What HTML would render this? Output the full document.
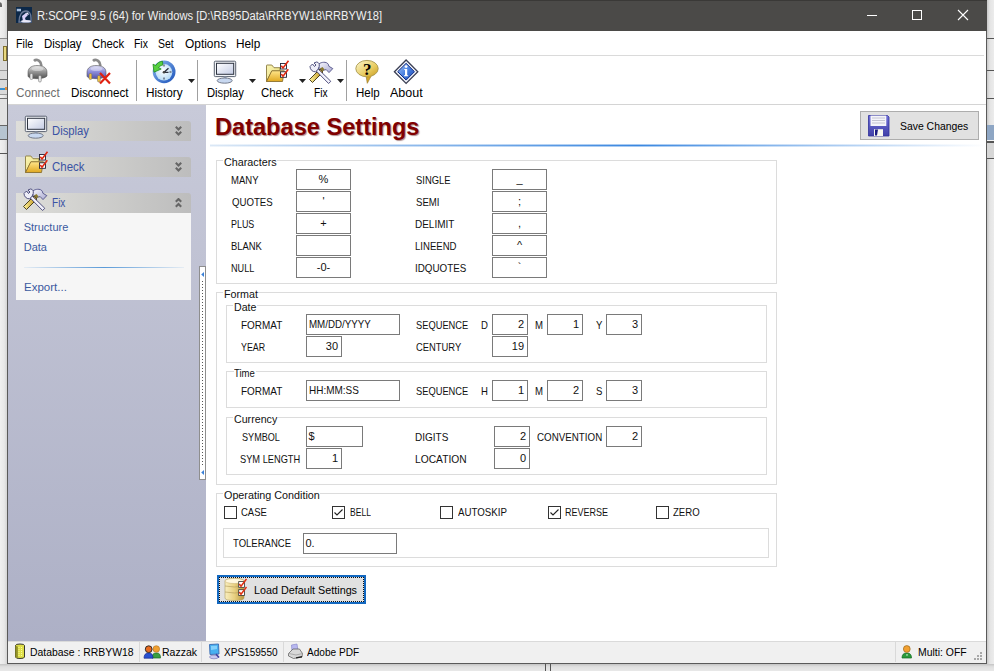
<!DOCTYPE html>
<html><head><meta charset="utf-8">
<style>
*{margin:0;padding:0;box-sizing:border-box}
html,body{width:994px;height:671px;overflow:hidden;background:#ececec;font-family:"Liberation Sans",sans-serif;color:#000}
.a{position:absolute}
.t{position:absolute;white-space:nowrap;transform-origin:0 0}
</style></head><body>
<div class="a" style="left:0px;top:0px;width:7px;height:671px;background:linear-gradient(90deg,#f0f0f0,#e8e8e8 60%,#d4d4d4)"></div>
<div class="a" style="left:0px;top:38px;width:7px;height:56px;background:#dadada"></div>
<div class="a" style="left:0px;top:38px;width:7px;height:1px;background:#8c8c8c"></div>
<div class="a" style="left:0px;top:70px;width:7px;height:1px;background:#9a9a9a"></div>
<div class="a" style="left:0px;top:79px;width:7px;height:1px;background:#6a6a6a"></div>
<div class="a" style="left:0px;top:88px;width:5px;height:2px;background:#3a90d0"></div>
<div class="a" style="left:5px;top:87px;width:2px;height:3px;background:#e09040"></div>
<div class="a" style="left:0px;top:94px;width:7px;height:1px;background:#9a9a9a"></div>
<div class="a" style="left:0px;top:98px;width:7px;height:1px;background:#707070"></div>
<div class="a" style="left:0px;top:99px;width:7px;height:26px;background:#e2e2e2"></div>
<div class="a" style="left:0px;top:125px;width:7px;height:15px;background:#b6c4d0;border-top:1px solid #666;border-bottom:1px solid #666"></div>
<div class="a" style="left:0px;top:153px;width:7px;height:1px;background:#555"></div>
<div class="a" style="left:3px;top:46px;width:4px;height:15px;background:#e8d880;border:1px solid #807030"></div>
<div class="a" style="left:-3px;top:2px;width:5px;height:5px;border-right:2px solid #666;border-top:1px solid #777;border-top-right-radius:3px"></div>
<div class="a" style="left:987px;top:0px;width:7px;height:671px;background:linear-gradient(90deg,#c8c8c8,#e4e4e4 40%,#ececec)"></div>
<div class="a" style="left:987px;top:38px;width:7px;height:1px;background:#555"></div>
<div class="a" style="left:987px;top:70px;width:7px;height:1px;background:#555"></div>
<div class="a" style="left:987px;top:98px;width:7px;height:1px;background:#555"></div>
<div class="a" style="left:987px;top:125px;width:7px;height:15px;background:#8ea6c4"></div>
<div class="a" style="left:987px;top:140px;width:7px;height:1px;background:#f4f4f4"></div>
<div class="a" style="left:987px;top:141px;width:7px;height:2px;background:#555"></div>
<div class="a" style="left:987px;top:143px;width:7px;height:15px;background:#d6d6d6"></div>
<div class="a" style="left:987px;top:158px;width:7px;height:1px;background:#555"></div>
<div class="a" style="left:0px;top:664px;width:994px;height:7px;background:linear-gradient(#c4c4c4,#e0e0e0 40%,#e8e8e8)"></div>
<div class="a" style="left:545px;top:664px;width:1px;height:7px;background:#555"></div>
<div class="a" style="left:550px;top:664px;width:1px;height:7px;background:#555"></div>
<div class="a" style="left:7px;top:0px;width:980px;height:664px;background:#fff;border:1px solid #5a5a5a;border-top:none"></div>
<div class="a" style="left:7px;top:0px;width:980px;height:31px;background:#4b4a48"></div>
<div class="a" style="left:7px;top:0px;width:980px;height:1px;background:#3a3937"></div>
<svg class="a" style="left:16px;top:7px" width="16" height="16" viewBox="0 0 16 16"><rect x="0" y="0" width="16" height="16" fill="#0c2848"/>
<path d="M3 15 C3 8 6 4 10 4 C13 4 15 7 15 11 L15 15 Z" fill="none" stroke="#6a7a98" stroke-width="1.4"/>
<path d="M6 9 L10 6 L12 8 L9 11 L10 14 L7 14 Z" fill="#d8d0f8"/>
<path d="M9 6 L12 5.5 L13 8" fill="#f0f0ff"/>
<ellipse cx="10" cy="14.2" rx="5" ry="1.3" fill="#e8e8f8"/>
<rect x="0.8" y="1.8" width="4.2" height="2.5" fill="#a8c0e0"/></svg>
<div class="t" style="left:37px;top:10px;font-size:12px;line-height:12px;color:#f0f0f0;transform:scaleX(0.9288);">R:SCOPE 9.5 (64) for Windows [D:\RB95Data\RRBYW18\RRBYW18]</div>
<div class="a" style="left:867px;top:15px;width:10px;height:1px;background:#fff"></div>
<div class="a" style="left:912px;top:10px;width:10px;height:10px;border:1px solid #fff"></div>
<svg class="a" style="left:957px;top:9px" width="12" height="12" viewBox="0 0 12 12"><path d="M1 1 L11 11 M11 1 L1 11" stroke="#fff" stroke-width="1.1"/></svg>
<div class="t" style="left:15.8px;top:38px;font-size:12px;line-height:12px;color:#000;transform:scaleX(0.8896);">File</div>
<div class="t" style="left:43.5px;top:38px;font-size:12px;line-height:12px;color:#000;transform:scaleX(0.9557);">Display</div>
<div class="t" style="left:91.6px;top:38px;font-size:12px;line-height:12px;color:#000;transform:scaleX(0.9467);">Check</div>
<div class="t" style="left:134.2px;top:38px;font-size:12px;line-height:12px;color:#000;transform:scaleX(0.8690);">Fix</div>
<div class="t" style="left:158.3px;top:38px;font-size:12px;line-height:12px;color:#000;transform:scaleX(0.8716);">Set</div>
<div class="t" style="left:184.7px;top:38px;font-size:12px;line-height:12px;color:#000;transform:scaleX(0.9938);">Options</div>
<div class="t" style="left:236.3px;top:38px;font-size:12px;line-height:12px;color:#000;transform:scaleX(0.9847);">Help</div>
<div class="a" style="left:8px;top:55px;width:976px;height:1px;background:#dadada"></div>
<svg width="0" height="0" style="position:absolute"><defs>
<linearGradient id="gPlug" x1="0" y1="0" x2="0" y2="1"><stop offset="0" stop-color="#e8e8e8"/><stop offset="0.45" stop-color="#9a9a9a"/><stop offset="1" stop-color="#505050"/></linearGradient>
<linearGradient id="gPlugP" x1="0" y1="0" x2="0" y2="1"><stop offset="0" stop-color="#dcdcf4"/><stop offset="0.45" stop-color="#9090dc"/><stop offset="1" stop-color="#5050a8"/></linearGradient>
<linearGradient id="gGold" x1="0" y1="0" x2="1" y2="0"><stop offset="0" stop-color="#fff4a0"/><stop offset="1" stop-color="#b88a10"/></linearGradient>
<radialGradient id="gClockFace" cx="0.45" cy="0.4" r="0.6"><stop offset="0" stop-color="#ffffff"/><stop offset="1" stop-color="#b8dcf6"/></radialGradient>
<linearGradient id="gClockRing" x1="0" y1="0" x2="1" y2="1"><stop offset="0" stop-color="#8ab8f0"/><stop offset="1" stop-color="#1a50b8"/></linearGradient>
<linearGradient id="gScreen" x1="0" y1="0" x2="1" y2="1"><stop offset="0" stop-color="#ffffff"/><stop offset="1" stop-color="#c4cce4"/></linearGradient>
<linearGradient id="gFolderF" x1="0" y1="0" x2="0" y2="1"><stop offset="0" stop-color="#ffe58a"/><stop offset="1" stop-color="#e0a820"/></linearGradient>
<linearGradient id="gFolderB" x1="0" y1="0" x2="1" y2="1"><stop offset="0" stop-color="#fbf6b8"/><stop offset="1" stop-color="#e8d870"/></linearGradient>
<linearGradient id="gHelp" x1="0" y1="0" x2="1" y2="1"><stop offset="0" stop-color="#fbf6d0"/><stop offset="0.6" stop-color="#e8cc60"/><stop offset="1" stop-color="#c89a20"/></linearGradient>
<linearGradient id="gInfo" x1="0" y1="0" x2="1" y2="1"><stop offset="0" stop-color="#a8c8f8"/><stop offset="0.5" stop-color="#4a80e0"/><stop offset="1" stop-color="#1a48b0"/></linearGradient>
<linearGradient id="gHammer" x1="0" y1="0" x2="1" y2="1"><stop offset="0" stop-color="#fafaff"/><stop offset="1" stop-color="#a8a8d0"/></linearGradient>
<linearGradient id="gFloppy" x1="0" y1="0" x2="0" y2="1"><stop offset="0" stop-color="#7070d8"/><stop offset="1" stop-color="#4040a8"/></linearGradient>
<linearGradient id="gDb" x1="0" y1="0" x2="1" y2="0"><stop offset="0" stop-color="#f8eec0"/><stop offset="0.5" stop-color="#e8d080"/><stop offset="1" stop-color="#b89840"/></linearGradient>
</defs></svg>
<svg class="a" style="left:27px;top:56px" width="24" height="30" viewBox="0 0 24 30"><path d="M7 5 C9 3 12 4 13.5 6.5 L14.5 10" fill="none" stroke="#8a8a8a" stroke-width="2.6"/>
<path d="M1 16.5 C1 11 6 9.5 10 9.5 C15 9.5 20 11 20 16.5 L20 20 C17 23.5 4 23.5 1 20.5 Z" fill="url(#gPlug)" stroke="#555" stroke-width="0.6"/>
<ellipse cx="10.5" cy="13" rx="6" ry="2" fill="rgba(255,255,255,0.35)"/>
<rect x="3" y="17.5" width="2.8" height="6" rx="1.2" fill="#e4e4e4" stroke="#666" stroke-width="0.5"/>
<rect x="11.5" y="19.5" width="2.8" height="6.5" rx="1.2" fill="#e4e4e4" stroke="#666" stroke-width="0.5"/></svg>
<svg class="a" style="left:86px;top:56px" width="30" height="30" viewBox="0 0 30 30"><path d="M7 5 C9 3 12 4 13.5 6.5 L14.5 10" fill="none" stroke="#8a8a8a" stroke-width="2.6"/>
<path d="M1 16.5 C1 11 6 9.5 10 9.5 C15 9.5 20 11 20 16.5 L20 20 C17 23.5 4 23.5 1 20.5 Z" fill="url(#gPlugP)" stroke="#555" stroke-width="0.6"/>
<ellipse cx="10.5" cy="13" rx="6" ry="2" fill="rgba(255,255,255,0.35)"/>
<rect x="3" y="17.5" width="2.8" height="6" rx="1.2" fill="#f0c040" stroke="#666" stroke-width="0.5"/>
<rect x="11.5" y="19.5" width="2.8" height="6.5" rx="1.2" fill="#f0c040" stroke="#666" stroke-width="0.5"/><path d="M14 17 L24 27.5 M24 17 L14 27.5" stroke="#e02010" stroke-width="2.2"/></svg>
<svg class="a" style="left:152px;top:60px" width="24" height="24" viewBox="0 0 24 24"><circle cx="12.1" cy="11.8" r="11.4" fill="url(#gClockRing)"/>
<circle cx="12" cy="12.3" r="8.3" fill="url(#gClockFace)"/>
<path d="M12 4.5 V6.5 M12 17.5 V19.5 M19.5 12 H17.5" stroke="#334" stroke-width="1"/>
<path d="M12 12.3 L16.5 8.2 M12 12.3 H16.5" stroke="#2a3040" stroke-width="1.3"/>
<circle cx="12" cy="12.3" r="1.3" fill="#444"/>
<path d="M10.5 1.2 C7.5 1.5 5.2 3 3.8 5.5 L1 4.2 L2 12.2 L9.2 9 L6.6 7.7 C7.5 6.3 8.8 5.4 10.8 5 Z" fill="#58d040" stroke="#208a20" stroke-width="0.8"/></svg>
<svg class="a" style="left:208px;top:57px" width="32" height="30" viewBox="0 0 32 30"><rect x="6.3" y="4.2" width="21.4" height="15.4" rx="1" fill="#f2f4f8" stroke="#5a6270" stroke-width="1"/>
<rect x="8.5" y="6.3" width="17.2" height="11" fill="url(#gScreen)" stroke="#2e3440" stroke-width="1"/>
<rect x="15.6" y="19.6" width="3" height="3.2" fill="#9aa6ba"/>
<ellipse cx="16.7" cy="23.6" rx="7.5" ry="2.6" fill="#c8d8f0" stroke="#6a7080" stroke-width="0.9"/></svg>
<svg class="a" style="left:262px;top:57px" width="32" height="30" viewBox="0 0 32 30"><path d="M4.5 24.5 L4.5 8.5 Q4.5 8 5 8 L9.8 8 L12 10.7 L18 10.7 L18 14 L10 14 Z" fill="url(#gFolderB)" stroke="#8a7a40" stroke-width="0.9"/>
<path d="M4.5 24.5 L9.8 13.8 L22.3 13.8 L20.5 24.5 Z" fill="url(#gFolderF)" stroke="#8a7030" stroke-width="0.9"/>
<rect x="18.5" y="6.5" width="6" height="5.5" fill="#fff" stroke="#223" stroke-width="0.9"/>
<rect x="18.5" y="14.8" width="6" height="5.5" fill="#fff" stroke="#223" stroke-width="0.9"/>
<path d="M19.3 8.8 L21 11 L26.5 3.8" fill="none" stroke="#e02810" stroke-width="1.6"/>
<path d="M19.3 17 L21 19.2 L26.3 12.2" fill="none" stroke="#e02810" stroke-width="1.6"/></svg>
<svg class="a" style="left:305px;top:57px" width="32" height="30" viewBox="0 0 32 30"><path d="M4.5 22.5 L15 12 L18 15 L7.5 25.5 Z" fill="url(#gGold)" stroke="#3a3010" stroke-width="0.9"/>
<path d="M12.5 9.5 C13 6.5 16.5 5 20 5.3 C22.5 5.6 23.8 7.3 23.8 9.2 L27.8 11.6 L24 15.6 L21.2 12.6 L17.5 13.5 Z" fill="url(#gHammer)" stroke="#505088" stroke-width="0.9"/>
<path d="M15 11.5 L17.5 10 L19.5 12.5 L17.5 14.5 Z" fill="#8a7a30"/>
<path d="M11 13.8 L13 11.8 L25.8 24.3 L23.6 26.5 Z" fill="#f2f2fc" stroke="#404070" stroke-width="0.9"/>
<path d="M5 9.5 L7.5 7 L9.5 9.5 L11 8 L9 6 L11.5 5 C13.5 5 14.8 7 14.2 9.5 L13 12.5 L10.5 14.8 C7.5 15 5 12.5 5 9.5 Z" fill="#eeeef8" stroke="#404070" stroke-width="0.9"/></svg>
<svg class="a" style="left:351px;top:57px" width="32" height="30" viewBox="0 0 32 30"><path d="M15.2 19.8 L16.3 26.3 L19.8 19.6 Z" fill="#d4a828" stroke="#a08030" stroke-width="0.7"/>
<ellipse cx="16" cy="11.6" rx="11.2" ry="8.2" fill="url(#gHelp)" stroke="#a89850" stroke-width="0.9"/>
<path d="M16.5 19.6 L19.6 19.6" stroke="#d4a828" stroke-width="1.4"/>
<text x="16.2" y="18" text-anchor="middle" font-family="Liberation Serif" font-weight="bold" font-size="17" fill="#000">?</text></svg>
<svg class="a" style="left:390px;top:57px" width="32" height="30" viewBox="0 0 32 30"><path d="M16.1 3 L27.8 14.7 L16.1 26.4 L4.4 14.7 Z" fill="#f4f6fc" stroke="#3a3e52" stroke-width="1.3"/>
<path d="M16.1 6.3 L24.5 14.7 L16.1 23.1 L7.7 14.7 Z" fill="url(#gInfo)" stroke="#102a80" stroke-width="1"/>
<circle cx="16.1" cy="9.6" r="1.4" fill="#fff"/>
<path d="M14.3 12 H17.2 V18.2 H18.2 V19.2 H14 V18.2 H15 V13 H14.3 Z" fill="#fff"/></svg>
<div class="a" style="left:8px;top:104px;width:978px;height:1px;background:#d4d4d4"></div>
<div class="a" style="left:136px;top:60px;width:1px;height:41px;background:#a0a0a0"></div>
<div class="a" style="left:197px;top:60px;width:1px;height:41px;background:#a0a0a0"></div>
<div class="a" style="left:346px;top:60px;width:1px;height:41px;background:#a0a0a0"></div>
<div class="t" style="left:16px;top:87px;font-size:12px;line-height:12px;color:#6d6d6d;transform:scaleX(0.9778);">Connect</div>
<div class="t" style="left:71.1px;top:87px;font-size:12px;line-height:12px;color:#000;transform:scaleX(0.9687);">Disconnect</div>
<div class="t" style="left:145.7px;top:87px;font-size:12px;line-height:12px;color:#000;transform:scaleX(0.9803);">History</div>
<div class="t" style="left:206.8px;top:87px;font-size:12px;line-height:12px;color:#000;transform:scaleX(0.9353);">Display</div>
<div class="t" style="left:261.4px;top:87px;font-size:12px;line-height:12px;color:#000;transform:scaleX(0.9526);">Check</div>
<div class="t" style="left:314.2px;top:87px;font-size:12px;line-height:12px;color:#000;transform:scaleX(0.8502);">Fix</div>
<div class="t" style="left:355.6px;top:87px;font-size:12px;line-height:12px;color:#000;transform:scaleX(0.9604);">Help</div>
<div class="t" style="left:390.3px;top:87px;font-size:12px;line-height:12px;color:#000;transform:scaleX(1.0428);">About</div>
<svg class="a" style="left:188px;top:79px" width="7" height="4" viewBox="0 0 7 4"><path d="M0 0 H7 L3.5 4 Z" fill="#222"/></svg>
<svg class="a" style="left:249px;top:79px" width="7" height="4" viewBox="0 0 7 4"><path d="M0 0 H7 L3.5 4 Z" fill="#222"/></svg>
<svg class="a" style="left:299px;top:79px" width="7" height="4" viewBox="0 0 7 4"><path d="M0 0 H7 L3.5 4 Z" fill="#222"/></svg>
<svg class="a" style="left:337px;top:79px" width="7" height="4" viewBox="0 0 7 4"><path d="M0 0 H7 L3.5 4 Z" fill="#222"/></svg>
<div class="a" style="left:8px;top:105px;width:198px;height:536px;background:linear-gradient(#c8cad9,#adb0c6)"></div>
<div class="a" style="left:16px;top:121px;width:175px;height:20px;background:linear-gradient(90deg,#dededa,#bdbdbd);border-top-right-radius:3px"></div>
<div class="a" style="left:16px;top:157px;width:175px;height:20px;background:linear-gradient(90deg,#dededa,#bdbdbd);border-top-right-radius:3px"></div>
<div class="a" style="left:16px;top:193px;width:175px;height:20px;background:linear-gradient(90deg,#dededa,#bdbdbd);border-top-right-radius:3px"></div>
<div class="t" style="left:52.3px;top:125px;font-size:12px;line-height:12px;color:#3a53a4;transform:scaleX(0.9404);">Display</div>
<div class="t" style="left:52.3px;top:161px;font-size:12px;line-height:12px;color:#3a53a4;transform:scaleX(0.9555);">Check</div>
<div class="t" style="left:52.3px;top:197px;font-size:12px;line-height:12px;color:#3a53a4;transform:scaleX(0.8377);">Fix</div>
<svg class="a" style="left:175px;top:126px" width="7" height="10" viewBox="0 0 7 10"><path d="M0.8 0.8 L3.5 3.5 L6.2 0.8 M0.8 5.8 L3.5 8.5 L6.2 5.8" fill="none" stroke="#666" stroke-width="2.1"/></svg>
<svg class="a" style="left:175px;top:162px" width="7" height="10" viewBox="0 0 7 10"><path d="M0.8 0.8 L3.5 3.5 L6.2 0.8 M0.8 5.8 L3.5 8.5 L6.2 5.8" fill="none" stroke="#666" stroke-width="2.1"/></svg>
<svg class="a" style="left:175px;top:198px" width="7" height="10" viewBox="0 0 7 10"><path d="M0.8 3.7 L3.5 1 L6.2 3.7 M0.8 8.7 L3.5 6 L6.2 8.7" fill="none" stroke="#666" stroke-width="2.1"/></svg>
<svg class="a" style="left:19px;top:112px" width="32" height="30" viewBox="0 0 32 30"><rect x="6.3" y="4.2" width="21.4" height="15.4" rx="1" fill="#f2f4f8" stroke="#5a6270" stroke-width="1"/>
<rect x="8.5" y="6.3" width="17.2" height="11" fill="url(#gScreen)" stroke="#2e3440" stroke-width="1"/>
<rect x="15.6" y="19.6" width="3" height="3.2" fill="#9aa6ba"/>
<ellipse cx="16.7" cy="23.6" rx="7.5" ry="2.6" fill="#c8d8f0" stroke="#6a7080" stroke-width="0.9"/></svg>
<svg class="a" style="left:21px;top:148px" width="32" height="30" viewBox="0 0 32 30"><path d="M4.5 24.5 L4.5 8.5 Q4.5 8 5 8 L9.8 8 L12 10.7 L18 10.7 L18 14 L10 14 Z" fill="url(#gFolderB)" stroke="#8a7a40" stroke-width="0.9"/>
<path d="M4.5 24.5 L9.8 13.8 L22.3 13.8 L20.5 24.5 Z" fill="url(#gFolderF)" stroke="#8a7030" stroke-width="0.9"/>
<rect x="18.5" y="6.5" width="6" height="5.5" fill="#fff" stroke="#223" stroke-width="0.9"/>
<rect x="18.5" y="14.8" width="6" height="5.5" fill="#fff" stroke="#223" stroke-width="0.9"/>
<path d="M19.3 8.8 L21 11 L26.5 3.8" fill="none" stroke="#e02810" stroke-width="1.6"/>
<path d="M19.3 17 L21 19.2 L26.3 12.2" fill="none" stroke="#e02810" stroke-width="1.6"/></svg>
<svg class="a" style="left:19px;top:184px" width="32" height="30" viewBox="0 0 32 30"><path d="M4.5 22.5 L15 12 L18 15 L7.5 25.5 Z" fill="url(#gGold)" stroke="#3a3010" stroke-width="0.9"/>
<path d="M12.5 9.5 C13 6.5 16.5 5 20 5.3 C22.5 5.6 23.8 7.3 23.8 9.2 L27.8 11.6 L24 15.6 L21.2 12.6 L17.5 13.5 Z" fill="url(#gHammer)" stroke="#505088" stroke-width="0.9"/>
<path d="M15 11.5 L17.5 10 L19.5 12.5 L17.5 14.5 Z" fill="#8a7a30"/>
<path d="M11 13.8 L13 11.8 L25.8 24.3 L23.6 26.5 Z" fill="#f2f2fc" stroke="#404070" stroke-width="0.9"/>
<path d="M5 9.5 L7.5 7 L9.5 9.5 L11 8 L9 6 L11.5 5 C13.5 5 14.8 7 14.2 9.5 L13 12.5 L10.5 14.8 C7.5 15 5 12.5 5 9.5 Z" fill="#eeeef8" stroke="#404070" stroke-width="0.9"/></svg>
<div class="a" style="left:16px;top:213px;width:175px;height:87px;background:#f6f6f6"></div>
<div class="t" style="left:23.7px;top:222px;font-size:11px;line-height:11px;color:#3b5aa0;">Structure</div>
<div class="t" style="left:23.7px;top:242px;font-size:11px;line-height:11px;color:#3b5aa0;">Data</div>
<div class="t" style="left:23.7px;top:282px;font-size:11px;line-height:11px;color:#3b5aa0;transform:scaleX(1.0474);">Export...</div>
<div class="a" style="left:24px;top:267px;width:160px;height:1px;background:linear-gradient(90deg,rgba(80,150,220,0.1),#5a9ad8 50%,rgba(80,150,220,0.1))"></div>
<div class="a" style="left:199px;top:266px;width:7px;height:214px;background:#fff;border:1px solid #8e8e8e"></div>
<svg class="a" style="left:200px;top:267px" width="5" height="212" viewBox="0 0 5 212"><path d="M4 5 L1.2 7.5 L4 10 Z" fill="#3a80d8"/><path d="M4 203 L1.2 205.5 L4 208 Z" fill="#3a80d8"/><rect x="2" y="14" width="1" height="1" fill="#555"/><rect x="2" y="17" width="1" height="1" fill="#555"/><rect x="2" y="20" width="1" height="1" fill="#555"/><rect x="2" y="23" width="1" height="1" fill="#555"/><rect x="2" y="26" width="1" height="1" fill="#555"/><rect x="2" y="29" width="1" height="1" fill="#555"/><rect x="2" y="32" width="1" height="1" fill="#555"/><rect x="2" y="35" width="1" height="1" fill="#555"/><rect x="2" y="38" width="1" height="1" fill="#555"/><rect x="2" y="41" width="1" height="1" fill="#555"/><rect x="2" y="44" width="1" height="1" fill="#555"/><rect x="2" y="47" width="1" height="1" fill="#555"/><rect x="2" y="50" width="1" height="1" fill="#555"/><rect x="2" y="53" width="1" height="1" fill="#555"/><rect x="2" y="56" width="1" height="1" fill="#555"/><rect x="2" y="59" width="1" height="1" fill="#555"/><rect x="2" y="62" width="1" height="1" fill="#555"/><rect x="2" y="65" width="1" height="1" fill="#555"/><rect x="2" y="68" width="1" height="1" fill="#555"/><rect x="2" y="71" width="1" height="1" fill="#555"/><rect x="2" y="74" width="1" height="1" fill="#555"/><rect x="2" y="77" width="1" height="1" fill="#555"/><rect x="2" y="80" width="1" height="1" fill="#555"/><rect x="2" y="83" width="1" height="1" fill="#555"/><rect x="2" y="86" width="1" height="1" fill="#555"/><rect x="2" y="89" width="1" height="1" fill="#555"/><rect x="2" y="92" width="1" height="1" fill="#555"/><rect x="2" y="95" width="1" height="1" fill="#555"/><rect x="2" y="98" width="1" height="1" fill="#555"/><rect x="2" y="101" width="1" height="1" fill="#555"/><rect x="2" y="104" width="1" height="1" fill="#555"/><rect x="2" y="107" width="1" height="1" fill="#555"/><rect x="2" y="110" width="1" height="1" fill="#555"/><rect x="2" y="113" width="1" height="1" fill="#555"/><rect x="2" y="116" width="1" height="1" fill="#555"/><rect x="2" y="119" width="1" height="1" fill="#555"/><rect x="2" y="122" width="1" height="1" fill="#555"/><rect x="2" y="125" width="1" height="1" fill="#555"/><rect x="2" y="128" width="1" height="1" fill="#555"/><rect x="2" y="131" width="1" height="1" fill="#555"/><rect x="2" y="134" width="1" height="1" fill="#555"/><rect x="2" y="137" width="1" height="1" fill="#555"/><rect x="2" y="140" width="1" height="1" fill="#555"/><rect x="2" y="143" width="1" height="1" fill="#555"/><rect x="2" y="146" width="1" height="1" fill="#555"/><rect x="2" y="149" width="1" height="1" fill="#555"/><rect x="2" y="152" width="1" height="1" fill="#555"/><rect x="2" y="155" width="1" height="1" fill="#555"/><rect x="2" y="158" width="1" height="1" fill="#555"/><rect x="2" y="161" width="1" height="1" fill="#555"/><rect x="2" y="164" width="1" height="1" fill="#555"/><rect x="2" y="167" width="1" height="1" fill="#555"/><rect x="2" y="170" width="1" height="1" fill="#555"/><rect x="2" y="173" width="1" height="1" fill="#555"/><rect x="2" y="176" width="1" height="1" fill="#555"/><rect x="2" y="179" width="1" height="1" fill="#555"/><rect x="2" y="182" width="1" height="1" fill="#555"/><rect x="2" y="185" width="1" height="1" fill="#555"/><rect x="2" y="188" width="1" height="1" fill="#555"/><rect x="2" y="191" width="1" height="1" fill="#555"/><rect x="2" y="194" width="1" height="1" fill="#555"/><rect x="2" y="197" width="1" height="1" fill="#555"/></svg>
<div class="t" style="left:214.8px;top:114.5px;font-size:24px;line-height:24px;color:#800000;font-weight:bold;transform:scaleX(0.9828);text-shadow:1px 1px 1px #b09090;">Database Settings</div>
<div class="a" style="left:210px;top:144px;width:776px;height:3px;background:linear-gradient(90deg,#dbe8f6,#3a87e0 55%,#ffffff);opacity:0.45"></div>
<div class="a" style="left:210px;top:145px;width:776px;height:1px;background:linear-gradient(90deg,#dbe8f6,#3a87e0 55%,#ffffff)"></div>
<div class="a" style="left:860px;top:111px;width:119px;height:29px;background:#e1e1e1;border:1px solid #adadad"></div>
<div class="t" style="left:899.7px;top:121px;font-size:11px;line-height:11px;color:#000;transform:scaleX(0.9465);">Save Changes</div>
<svg class="a" style="left:862px;top:110px" width="32" height="30" viewBox="0 0 32 30"><path d="M6.5 5.5 H25.5 L27 7 V26 H6.5 Z" fill="url(#gFloppy)" stroke="#30309a" stroke-width="0.8"/>
<rect x="8.5" y="5.6" width="15.8" height="10.4" fill="#f4f4fa"/>
<path d="M10 8 H23 M10 10.5 H23 M10 13 H23" stroke="#b8b8c8" stroke-width="0.8"/>
<rect x="12" y="19.2" width="9" height="6.8" fill="#f8f8f0"/>
<path d="M13 19.5 H16 L15 25.5 H13 Z" fill="#1a1a80"/></svg>
<div class="a" style="left:216px;top:160px;width:561px;height:124px;border:1px solid #dcdcdc"></div>
<div class="a" style="left:223.1px;top:160px;width:54.2px;height:1px;background:#fff"></div>
<div class="t" style="left:223.6px;top:157px;font-size:11px;line-height:11px;color:#111;transform:scaleX(0.9797);">Characters</div>
<div class="t" style="left:230.8px;top:175px;font-size:11px;line-height:11px;color:#111;transform:scaleX(0.8653);">MANY</div>
<div class="a" style="left:296px;top:169px;width:55px;height:21px;background:#fff;border:1px solid #7a7a7a"></div>
<div class="t" style="left:318.6px;top:174px;font-size:11px;line-height:11px;color:#111;">%</div>
<div class="t" style="left:415.7px;top:175px;font-size:11px;line-height:11px;color:#111;transform:scaleX(0.8551);">SINGLE</div>
<div class="a" style="left:492px;top:169px;width:55px;height:21px;background:#fff;border:1px solid #7a7a7a"></div>
<div class="t" style="left:516.4px;top:174px;font-size:11px;line-height:11px;color:#111;">_</div>
<div class="t" style="left:231.5px;top:197px;font-size:11px;line-height:11px;color:#111;transform:scaleX(0.8762);">QUOTES</div>
<div class="a" style="left:296px;top:191px;width:55px;height:21px;background:#fff;border:1px solid #7a7a7a"></div>
<div class="t" style="left:322.4px;top:196px;font-size:11px;line-height:11px;color:#111;">&#x27;</div>
<div class="t" style="left:415.7px;top:197px;font-size:11px;line-height:11px;color:#111;transform:scaleX(0.8738);">SEMI</div>
<div class="a" style="left:492px;top:191px;width:55px;height:21px;background:#fff;border:1px solid #7a7a7a"></div>
<div class="t" style="left:518.0px;top:196px;font-size:11px;line-height:11px;color:#111;">;</div>
<div class="t" style="left:230.8px;top:219px;font-size:11px;line-height:11px;color:#111;transform:scaleX(0.8108);">PLUS</div>
<div class="a" style="left:296px;top:213px;width:55px;height:21px;background:#fff;border:1px solid #7a7a7a"></div>
<div class="t" style="left:320.3px;top:218px;font-size:11px;line-height:11px;color:#111;">+</div>
<div class="t" style="left:415.0px;top:219px;font-size:11px;line-height:11px;color:#111;transform:scaleX(0.9080);">DELIMIT</div>
<div class="a" style="left:492px;top:213px;width:55px;height:21px;background:#fff;border:1px solid #7a7a7a"></div>
<div class="t" style="left:518.0px;top:218px;font-size:11px;line-height:11px;color:#111;">,</div>
<div class="t" style="left:230.8px;top:241px;font-size:11px;line-height:11px;color:#111;transform:scaleX(0.8566);">BLANK</div>
<div class="a" style="left:296px;top:235px;width:55px;height:21px;background:#fff;border:1px solid #7a7a7a"></div>
<div class="t" style="left:415.0px;top:241px;font-size:11px;line-height:11px;color:#111;transform:scaleX(0.8704);">LINEEND</div>
<div class="a" style="left:492px;top:235px;width:55px;height:21px;background:#fff;border:1px solid #7a7a7a"></div>
<div class="t" style="left:516.9px;top:240px;font-size:11px;line-height:11px;color:#111;">^</div>
<div class="t" style="left:230.8px;top:263px;font-size:11px;line-height:11px;color:#111;transform:scaleX(0.8285);">NULL</div>
<div class="a" style="left:296px;top:257px;width:55px;height:21px;background:#fff;border:1px solid #7a7a7a"></div>
<div class="t" style="left:316.8px;top:262px;font-size:11px;line-height:11px;color:#111;">-0-</div>
<div class="t" style="left:415.0px;top:263px;font-size:11px;line-height:11px;color:#111;transform:scaleX(0.8930);">IDQUOTES</div>
<div class="a" style="left:492px;top:257px;width:55px;height:21px;background:#fff;border:1px solid #7a7a7a"></div>
<div class="t" style="left:517.7px;top:262px;font-size:11px;line-height:11px;color:#111;">`</div>
<div class="a" style="left:216px;top:292px;width:561px;height:193px;border:1px solid #dcdcdc"></div>
<div class="a" style="left:223.0px;top:292px;width:35.4px;height:1px;background:#fff"></div>
<div class="t" style="left:223.5px;top:289px;font-size:11px;line-height:11px;color:#111;transform:scaleX(0.9732);">Format</div>
<div class="a" style="left:226px;top:305px;width:541px;height:58px;border:1px solid #dcdcdc"></div>
<div class="a" style="left:233.1px;top:305px;width:23.9px;height:1px;background:#fff"></div>
<div class="t" style="left:233.6px;top:302px;font-size:11px;line-height:11px;color:#111;transform:scaleX(0.9641);">Date</div>
<div class="t" style="left:240.9px;top:320px;font-size:11px;line-height:11px;color:#111;transform:scaleX(0.9053);">FORMAT</div>
<div class="a" style="left:306px;top:314px;width:94px;height:21px;background:#fff;border:1px solid #7a7a7a"></div>
<div class="t" style="left:308.5px;top:319px;font-size:11px;line-height:11px;color:#111;transform:scaleX(0.8855);">MM/DD/YYYY</div>
<div class="t" style="left:415.6px;top:320px;font-size:11px;line-height:11px;color:#111;transform:scaleX(0.8471);">SEQUENCE</div>
<div class="t" style="left:480.6px;top:320px;font-size:11px;line-height:11px;color:#111;transform:scaleX(0.8700);">D</div>
<div class="a" style="left:492px;top:314px;width:36px;height:21px;background:#fff;border:1px solid #7a7a7a"></div>
<div class="t" style="left:517.9px;top:319px;font-size:11px;line-height:11px;color:#111;">2</div>
<div class="t" style="left:534.7px;top:320px;font-size:11px;line-height:11px;color:#111;transform:scaleX(0.8700);">M</div>
<div class="a" style="left:547px;top:314px;width:36px;height:21px;background:#fff;border:1px solid #7a7a7a"></div>
<div class="t" style="left:572.9px;top:319px;font-size:11px;line-height:11px;color:#111;">1</div>
<div class="t" style="left:595.6px;top:320px;font-size:11px;line-height:11px;color:#111;transform:scaleX(0.8700);">Y</div>
<div class="a" style="left:606px;top:314px;width:36px;height:21px;background:#fff;border:1px solid #7a7a7a"></div>
<div class="t" style="left:631.9px;top:319px;font-size:11px;line-height:11px;color:#111;">3</div>
<div class="t" style="left:240.9px;top:342px;font-size:11px;line-height:11px;color:#111;transform:scaleX(0.8045);">YEAR</div>
<div class="a" style="left:306px;top:336px;width:36px;height:21px;background:#fff;border:1px solid #7a7a7a"></div>
<div class="t" style="left:325.8px;top:341px;font-size:11px;line-height:11px;color:#111;">30</div>
<div class="t" style="left:415.6px;top:342px;font-size:11px;line-height:11px;color:#111;transform:scaleX(0.8533);">CENTURY</div>
<div class="a" style="left:492px;top:336px;width:36px;height:21px;background:#fff;border:1px solid #7a7a7a"></div>
<div class="t" style="left:511.8px;top:341px;font-size:11px;line-height:11px;color:#111;">19</div>
<div class="a" style="left:226px;top:371px;width:541px;height:37px;border:1px solid #dcdcdc"></div>
<div class="a" style="left:233.7px;top:371px;width:22.3px;height:1px;background:#fff"></div>
<div class="t" style="left:234.2px;top:368px;font-size:11px;line-height:11px;color:#111;transform:scaleX(0.8654);">Time</div>
<div class="t" style="left:240.9px;top:386px;font-size:11px;line-height:11px;color:#111;transform:scaleX(0.9053);">FORMAT</div>
<div class="a" style="left:306px;top:380px;width:94px;height:21px;background:#fff;border:1px solid #7a7a7a"></div>
<div class="t" style="left:308.5px;top:385px;font-size:11px;line-height:11px;color:#111;transform:scaleX(0.9055);">HH:MM:SS</div>
<div class="t" style="left:415.6px;top:386px;font-size:11px;line-height:11px;color:#111;transform:scaleX(0.8471);">SEQUENCE</div>
<div class="t" style="left:480.6px;top:386px;font-size:11px;line-height:11px;color:#111;transform:scaleX(0.8700);">H</div>
<div class="a" style="left:492px;top:380px;width:36px;height:21px;background:#fff;border:1px solid #7a7a7a"></div>
<div class="t" style="left:517.9px;top:385px;font-size:11px;line-height:11px;color:#111;">1</div>
<div class="t" style="left:534.7px;top:386px;font-size:11px;line-height:11px;color:#111;transform:scaleX(0.8700);">M</div>
<div class="a" style="left:547px;top:380px;width:36px;height:21px;background:#fff;border:1px solid #7a7a7a"></div>
<div class="t" style="left:572.9px;top:385px;font-size:11px;line-height:11px;color:#111;">2</div>
<div class="t" style="left:595.6px;top:386px;font-size:11px;line-height:11px;color:#111;transform:scaleX(0.8700);">S</div>
<div class="a" style="left:606px;top:380px;width:36px;height:21px;background:#fff;border:1px solid #7a7a7a"></div>
<div class="t" style="left:631.9px;top:385px;font-size:11px;line-height:11px;color:#111;">3</div>
<div class="a" style="left:226px;top:417px;width:541px;height:58px;border:1px solid #dcdcdc"></div>
<div class="a" style="left:233.4px;top:417px;width:44.7px;height:1px;background:#fff"></div>
<div class="t" style="left:233.9px;top:414px;font-size:11px;line-height:11px;color:#111;transform:scaleX(0.9682);">Currency</div>
<div class="t" style="left:241.9px;top:432px;font-size:11px;line-height:11px;color:#111;transform:scaleX(0.8266);">SYMBOL</div>
<div class="a" style="left:306px;top:426px;width:57px;height:21px;background:#fff;border:1px solid #7a7a7a"></div>
<div class="t" style="left:308.5px;top:431px;font-size:11px;line-height:11px;color:#111;">$</div>
<div class="t" style="left:414.9px;top:432px;font-size:11px;line-height:11px;color:#111;transform:scaleX(0.9081);">DIGITS</div>
<div class="a" style="left:494px;top:426px;width:36px;height:21px;background:#fff;border:1px solid #7a7a7a"></div>
<div class="t" style="left:519.9px;top:431px;font-size:11px;line-height:11px;color:#111;">2</div>
<div class="t" style="left:536.6px;top:432px;font-size:11px;line-height:11px;color:#111;transform:scaleX(0.8890);">CONVENTION</div>
<div class="a" style="left:606px;top:426px;width:36px;height:21px;background:#fff;border:1px solid #7a7a7a"></div>
<div class="t" style="left:631.9px;top:431px;font-size:11px;line-height:11px;color:#111;">2</div>
<div class="t" style="left:239.8px;top:454px;font-size:11px;line-height:11px;color:#111;transform:scaleX(0.8418);">SYM LENGTH</div>
<div class="a" style="left:306px;top:448px;width:36px;height:21px;background:#fff;border:1px solid #7a7a7a"></div>
<div class="t" style="left:331.9px;top:453px;font-size:11px;line-height:11px;color:#111;">1</div>
<div class="t" style="left:414.9px;top:454px;font-size:11px;line-height:11px;color:#111;transform:scaleX(0.9312);">LOCATION</div>
<div class="a" style="left:494px;top:448px;width:36px;height:21px;background:#fff;border:1px solid #7a7a7a"></div>
<div class="t" style="left:519.9px;top:453px;font-size:11px;line-height:11px;color:#111;">0</div>
<div class="a" style="left:216px;top:493px;width:561px;height:74px;border:1px solid #dcdcdc"></div>
<div class="a" style="left:223.0px;top:493px;width:97.3px;height:1px;background:#fff"></div>
<div class="t" style="left:223.5px;top:490px;font-size:11px;line-height:11px;color:#111;transform:scaleX(0.9792);">Operating Condition</div>
<div class="a" style="left:224px;top:506px;width:13px;height:13px;background:#fff;border:1px solid #333"></div>
<div class="t" style="left:241.2px;top:507px;font-size:11px;line-height:11px;color:#111;transform:scaleX(0.8613);">CASE</div>
<div class="a" style="left:332px;top:506px;width:13px;height:13px;background:#fff;border:1px solid #333"></div>
<svg class="a" style="left:332px;top:506px" width="13" height="13" viewBox="0 0 13 13"><path d="M2.5 6.5 L5 9 L10.5 3.5" fill="none" stroke="#222" stroke-width="1.1"/></svg>
<div class="t" style="left:349.6px;top:507px;font-size:11px;line-height:11px;color:#111;transform:scaleX(0.7767);">BELL</div>
<div class="a" style="left:440px;top:506px;width:13px;height:13px;background:#fff;border:1px solid #333"></div>
<div class="t" style="left:457.6px;top:507px;font-size:11px;line-height:11px;color:#111;transform:scaleX(0.8841);">AUTOSKIP</div>
<div class="a" style="left:548px;top:506px;width:13px;height:13px;background:#fff;border:1px solid #333"></div>
<svg class="a" style="left:548px;top:506px" width="13" height="13" viewBox="0 0 13 13"><path d="M2.5 6.5 L5 9 L10.5 3.5" fill="none" stroke="#222" stroke-width="1.1"/></svg>
<div class="t" style="left:565.1px;top:507px;font-size:11px;line-height:11px;color:#111;transform:scaleX(0.8198);">REVERSE</div>
<div class="a" style="left:656px;top:506px;width:13px;height:13px;background:#fff;border:1px solid #333"></div>
<div class="t" style="left:673.2px;top:507px;font-size:11px;line-height:11px;color:#111;transform:scaleX(0.8738);">ZERO</div>
<div class="a" style="left:223px;top:528px;width:546px;height:30px;border:1px solid #dcdcdc"></div>
<div class="t" style="left:233.3px;top:538px;font-size:11px;line-height:11px;color:#111;transform:scaleX(0.8652);">TOLERANCE</div>
<div class="a" style="left:303px;top:533px;width:94px;height:21px;background:#fff;border:1px solid #7a7a7a"></div>
<div class="t" style="left:305.5px;top:538px;font-size:11px;line-height:11px;color:#111;">0.</div>
<div class="a" style="left:217px;top:575px;width:149px;height:29px;background:#e1e1e1;border:2px solid #1268c0"></div>
<div class="a" style="left:219px;top:577px;width:145px;height:1px;background:repeating-linear-gradient(90deg,#111 0 1px,transparent 1px 2px)"></div>
<div class="a" style="left:219px;top:601px;width:145px;height:1px;background:repeating-linear-gradient(90deg,#111 0 1px,transparent 1px 2px)"></div>
<div class="a" style="left:219px;top:577px;width:1px;height:25px;background:repeating-linear-gradient(0deg,#111 0 1px,transparent 1px 2px)"></div>
<div class="a" style="left:363px;top:577px;width:1px;height:25px;background:repeating-linear-gradient(0deg,#111 0 1px,transparent 1px 2px)"></div>
<div class="t" style="left:254.3px;top:585px;font-size:11px;line-height:11px;color:#000;transform:scaleX(0.9793);">Load Default Settings</div>
<svg class="a" style="left:218px;top:574px" width="32" height="30" viewBox="0 0 32 30"><path d="M7 7 Q7 4.5 16.5 4.5 Q26 4.5 26 7 V24 Q26 26.5 16.5 26.5 Q7 26.5 7 24 Z" fill="url(#gDb)" stroke="#b0a060" stroke-width="0.6"/>
<ellipse cx="16.5" cy="7" rx="9.5" ry="2.5" fill="#fff8e0" stroke="#c8b070" stroke-width="0.5"/>
<path d="M7 12 Q16.5 14 26 12 M7 18 Q16.5 20 26 18" fill="none" stroke="#b8a060" stroke-width="0.7"/>
<rect x="20.7" y="7.6" width="5.8" height="5.7" fill="#fff" stroke="#333" stroke-width="0.8"/>
<rect x="20.7" y="15.7" width="5.8" height="5.7" fill="#fff" stroke="#333" stroke-width="0.8"/>
<path d="M21.3 10 L23 12.3 L28.5 5" fill="none" stroke="#e03010" stroke-width="1.5"/>
<path d="M21.3 18 L23 20.3 L28.5 13" fill="none" stroke="#e03010" stroke-width="1.5"/></svg>
<div class="a" style="left:8px;top:641px;width:978px;height:22px;background:#f0f0f0;border-top:1px solid #dadada"></div>
<div class="t" style="left:30.2px;top:647px;font-size:11px;line-height:11px;color:#000;transform:scaleX(0.9467);">Database : RRBYW18</div>
<div class="t" style="left:162px;top:647px;font-size:11px;line-height:11px;color:#000;transform:scaleX(0.9542);">Razzak</div>
<div class="t" style="left:224.4px;top:647px;font-size:11px;line-height:11px;color:#000;transform:scaleX(0.9129);">XPS159550</div>
<div class="t" style="left:307px;top:647px;font-size:11px;line-height:11px;color:#000;transform:scaleX(0.9180);">Adobe PDF</div>
<div class="t" style="left:918.3px;top:647px;font-size:11px;line-height:11px;color:#000;transform:scaleX(0.9488);">Multi: OFF</div>
<div class="a" style="left:139px;top:642px;width:1px;height:20px;background:#d9d9d9"></div>
<div class="a" style="left:201px;top:642px;width:1px;height:20px;background:#d9d9d9"></div>
<div class="a" style="left:283px;top:642px;width:1px;height:20px;background:#d9d9d9"></div>
<div class="a" style="left:895px;top:642px;width:1px;height:20px;background:#d9d9d9"></div>
<svg class="a" style="left:10px;top:638px" width="20" height="24" viewBox="0 0 20 24"><path d="M5.5 7.5 Q5.5 6 10 6 Q14.5 6 14.5 7.5 L14.5 19 Q14.5 20.5 10 20.5 Q5.5 20.5 5.5 19 Z" fill="#dede48" stroke="#222" stroke-width="0.9"/>
<path d="M5.6 8 V19 Q6.5 20 8 20.2 V8.5 Z" fill="#9a9a30"/>
<path d="M6 8 L6 19" stroke="#8a8a20" stroke-width="1"/>
<path d="M9 9 V19 M11.5 9 V19" stroke="#fafaa0" stroke-width="1" stroke-dasharray="1 1"/></svg>
<svg class="a" style="left:136px;top:638px" width="26" height="24" viewBox="0 0 26 24"><path d="M16 20 Q16 15 20 15 L21 15 Q24.5 15 24.5 20 Z" fill="#3aa040" stroke="#1a6a20" stroke-width="0.7"/>
<circle cx="20.3" cy="11" r="3.3" fill="#f0a030" stroke="#b07020" stroke-width="0.6"/>
<path d="M8 20.2 Q8 15 12.5 15 L13 15 Q17 15 17 20.2 Z" fill="#2850d0" stroke="#1a2a90" stroke-width="0.7"/>
<circle cx="12.7" cy="11.2" r="3.4" fill="#e86a20" stroke="#222" stroke-width="0.9"/></svg>
<svg class="a" style="left:200px;top:638px" width="24" height="24" viewBox="0 0 24 24"><path d="M9.5 6.5 L18.5 6 L19 16 L10 16.5 Z" fill="#48b0f0" stroke="#3a6ab0" stroke-width="0.9"/>
<path d="M11 8 L17 7.8 L17 11 L11 12 Z" fill="#a0e0ff" opacity="0.7"/>
<ellipse cx="14" cy="19" rx="4.5" ry="1.8" fill="#c8c8f0" stroke="#7070b0" stroke-width="0.6"/>
<path d="M16 16 L19 19.5" stroke="#4040a0" stroke-width="1.6"/></svg>
<svg class="a" style="left:282px;top:638px" width="24" height="24" viewBox="0 0 24 24"><path d="M9.5 7 L15 6 L16 13 L10 14 Z" fill="#b8b8f0" stroke="#8080c8" stroke-width="0.6"/>
<path d="M6.5 15.5 L11 11 L17.5 11 L20.5 15.5 L20 19 L11.5 20.5 L6.5 18 Z" fill="#d8d8d8" stroke="#555" stroke-width="0.7"/>
<path d="M7 15.5 L14 17 L20.5 15.5" fill="none" stroke="#888" stroke-width="0.6"/>
<path d="M14 19.2 L20 18 L20 19.5 L14 20.5 Z" fill="#222"/></svg>
<svg class="a" style="left:890px;top:638px" width="24" height="24" viewBox="0 0 24 24"><path d="M12 20 Q12 15 16.5 15 L17 15 Q21.5 15 21.5 20 Z" fill="#2a9a3a" stroke="#106a20" stroke-width="0.7"/>
<path d="M16 16.5 L17 18 L18 16.5 Z" fill="#fff"/>
<circle cx="16.8" cy="11" r="3.4" fill="#f2a030" stroke="#9a6a20" stroke-width="0.7"/></svg>
<div class="a" style="left:980px;top:652px;width:2px;height:2px;background:#a8a8a8"></div>
<div class="a" style="left:977px;top:655px;width:2px;height:2px;background:#a8a8a8"></div>
<div class="a" style="left:980px;top:655px;width:2px;height:2px;background:#a8a8a8"></div>
<div class="a" style="left:974px;top:658px;width:2px;height:2px;background:#a8a8a8"></div>
<div class="a" style="left:977px;top:658px;width:2px;height:2px;background:#a8a8a8"></div>
<div class="a" style="left:980px;top:658px;width:2px;height:2px;background:#a8a8a8"></div>
</body></html>
